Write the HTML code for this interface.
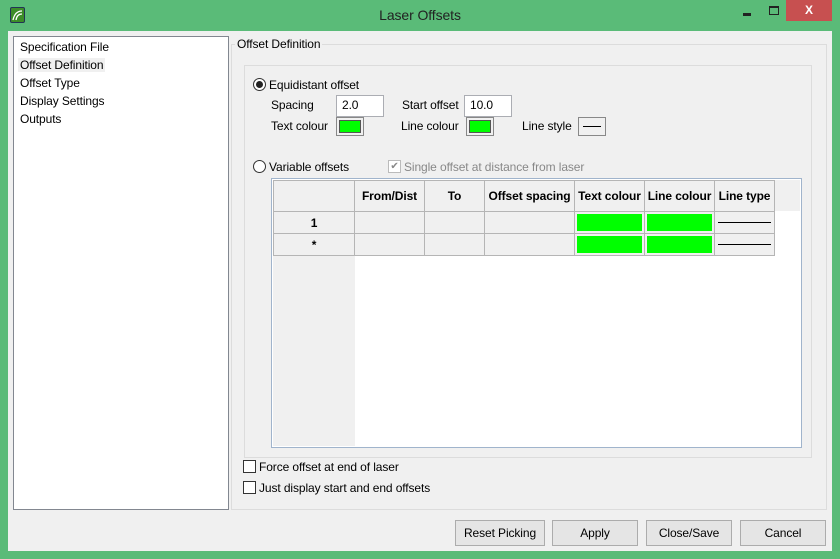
<!DOCTYPE html>
<html><head><style>
*{box-sizing:border-box;margin:0;padding:0}
body{width:840px;height:559px;background:#5abb78;font-family:"Liberation Sans",sans-serif;font-size:12px;color:#000;position:relative;overflow:hidden;letter-spacing:-0.1px}
.a{position:absolute}
.title{left:0;top:0;width:840px;height:31px;text-align:center;line-height:31px;font-size:14px;color:#222}
.client{left:8px;top:31px;width:824px;height:520px;background:#f0f0f0}
.list{left:13px;top:36px;width:216px;height:474px;background:#fff;border:1px solid #828790}
.list div{padding:3px 0 0 6px;height:18px}
.box{border:1px solid #dcdcdc}
.inp{background:#fff;border:1px solid #abadb3;padding:2px 0 0 5px}
.sw{border:1px solid #888;background:#f0f0f0;padding:2px}
.sw div{width:100%;height:100%;background:#00ff00;border:1px solid #555}
.radio{width:13px;height:13px;border-radius:50%;border:1px solid #333;background:#fff}
.cb{width:13px;height:13px;border:1px solid #333;background:#fff}
.btn{border:1px solid #acacac;background:#e5e5e5;text-align:center;line-height:24px;height:26px}
table{border-collapse:collapse;font-weight:bold}
td{border:1px solid #b5b5b5;background:#f0f0f0;text-align:center;padding:0}
</style></head><body>
<div class="a title">Laser Offsets</div>
<div class="a" style="left:10px;top:7px;width:15px;height:16px;background:#3c8d28;border:1px solid #235;border-radius:2px"><svg width="13" height="14"><path d="M2 12 Q4 3 11 3 M5 12 Q6 6 11 6" stroke="#fff" stroke-width="1.3" fill="none"/></svg></div>
<div class="a" style="left:743px;top:13px;width:8px;height:3px;background:#222"></div>
<div class="a" style="left:769px;top:6px;width:10px;height:9px;border:1px solid #222;border-top-width:2px"></div>
<div class="a" style="left:786px;top:0;width:46px;height:21px;background:#c75050;color:#fff;text-align:center;line-height:21px;font-size:12px;font-weight:bold">X</div>
<div class="a client"></div>
<div class="a list"><div>Specification File</div><div><span style="background:#f0f0f0;padding:0 2px;margin-left:-2px">Offset Definition</span></div><div>Offset Type</div><div>Display Settings</div><div>Outputs</div></div>
<div class="a box" style="left:231px;top:44px;width:596px;height:466px;border-color:#dcdcdc"></div>
<div class="a" style="left:235px;top:37px;background:#f0f0f0;padding:0 2px">Offset Definition</div>
<div class="a box" style="left:244px;top:65px;width:568px;height:393px"></div>
<div class="a radio" style="left:253px;top:78px"><div style="width:7px;height:7px;border-radius:50%;background:#222;margin:2px"></div></div>
<div class="a" style="left:269px;top:78px">Equidistant offset</div>
<div class="a" style="left:271px;top:98px">Spacing</div>
<div class="a inp" style="left:336px;top:95px;width:48px;height:22px">2.0</div>
<div class="a" style="left:402px;top:98px">Start offset</div>
<div class="a inp" style="left:464px;top:95px;width:48px;height:22px">10.0</div>
<div class="a" style="left:271px;top:119px">Text colour</div>
<div class="a sw" style="left:336px;top:117px;width:28px;height:19px"><div></div></div>
<div class="a" style="left:401px;top:119px">Line colour</div>
<div class="a sw" style="left:466px;top:117px;width:28px;height:19px"><div></div></div>
<div class="a" style="left:522px;top:119px">Line style</div>
<div class="a" style="left:578px;top:117px;width:28px;height:19px;border:1px solid #888;background:#f0f0f0"><div style="margin:8px 4px 0;height:1px;background:#000"></div></div>
<div class="a radio" style="left:253px;top:160px"></div>
<div class="a" style="left:269px;top:160px">Variable offsets</div>
<div class="a cb" style="left:388px;top:160px;border-color:#bbb;color:#888;font-size:10px;line-height:11px;text-align:center">✔</div>
<div class="a" style="left:404px;top:160px;color:#888">Single offset at distance from laser</div>
<div class="a" style="left:271px;top:178px;width:531px;height:270px;background:#fff;border:1px solid #a0b4cc"></div>
<div class="a" style="left:273px;top:180px;width:82px;height:266px;background:#f0f0f0"></div>
<div class="a" style="left:273px;top:180px;width:527px;height:31px;background:#f0f0f0"></div>
<table class="a" style="left:273px;top:180px">
<tr style="height:31px"><td style="width:81px"></td><td style="width:70px">From/Dist</td><td style="width:60px">To</td><td style="width:90px">Offset spacing</td><td style="width:70px">Text colour</td><td style="width:70px">Line colour</td><td style="width:60px">Line type</td></tr>
<tr style="height:22px"><td>1</td><td></td><td></td><td></td><td style="padding:2px"><div style="height:17px;background:#00ff00"></div></td><td style="padding:2px"><div style="height:17px;background:#00ff00"></div></td><td><div style="margin:0 3px;height:1px;background:#000"></div></td></tr>
<tr style="height:22px"><td>*</td><td></td><td></td><td></td><td style="padding:2px"><div style="height:17px;background:#00ff00"></div></td><td style="padding:2px"><div style="height:17px;background:#00ff00"></div></td><td><div style="margin:0 3px;height:1px;background:#000"></div></td></tr>
</table>
<div class="a cb" style="left:243px;top:460px"></div>
<div class="a" style="left:259px;top:460px">Force offset at end of laser</div>
<div class="a cb" style="left:243px;top:481px"></div>
<div class="a" style="left:259px;top:481px">Just display start and end offsets</div>
<div class="a btn" style="left:455px;top:520px;width:90px">Reset Picking</div>
<div class="a btn" style="left:552px;top:520px;width:86px">Apply</div>
<div class="a btn" style="left:646px;top:520px;width:86px">Close/Save</div>
<div class="a btn" style="left:740px;top:520px;width:86px">Cancel</div>
</body></html>
